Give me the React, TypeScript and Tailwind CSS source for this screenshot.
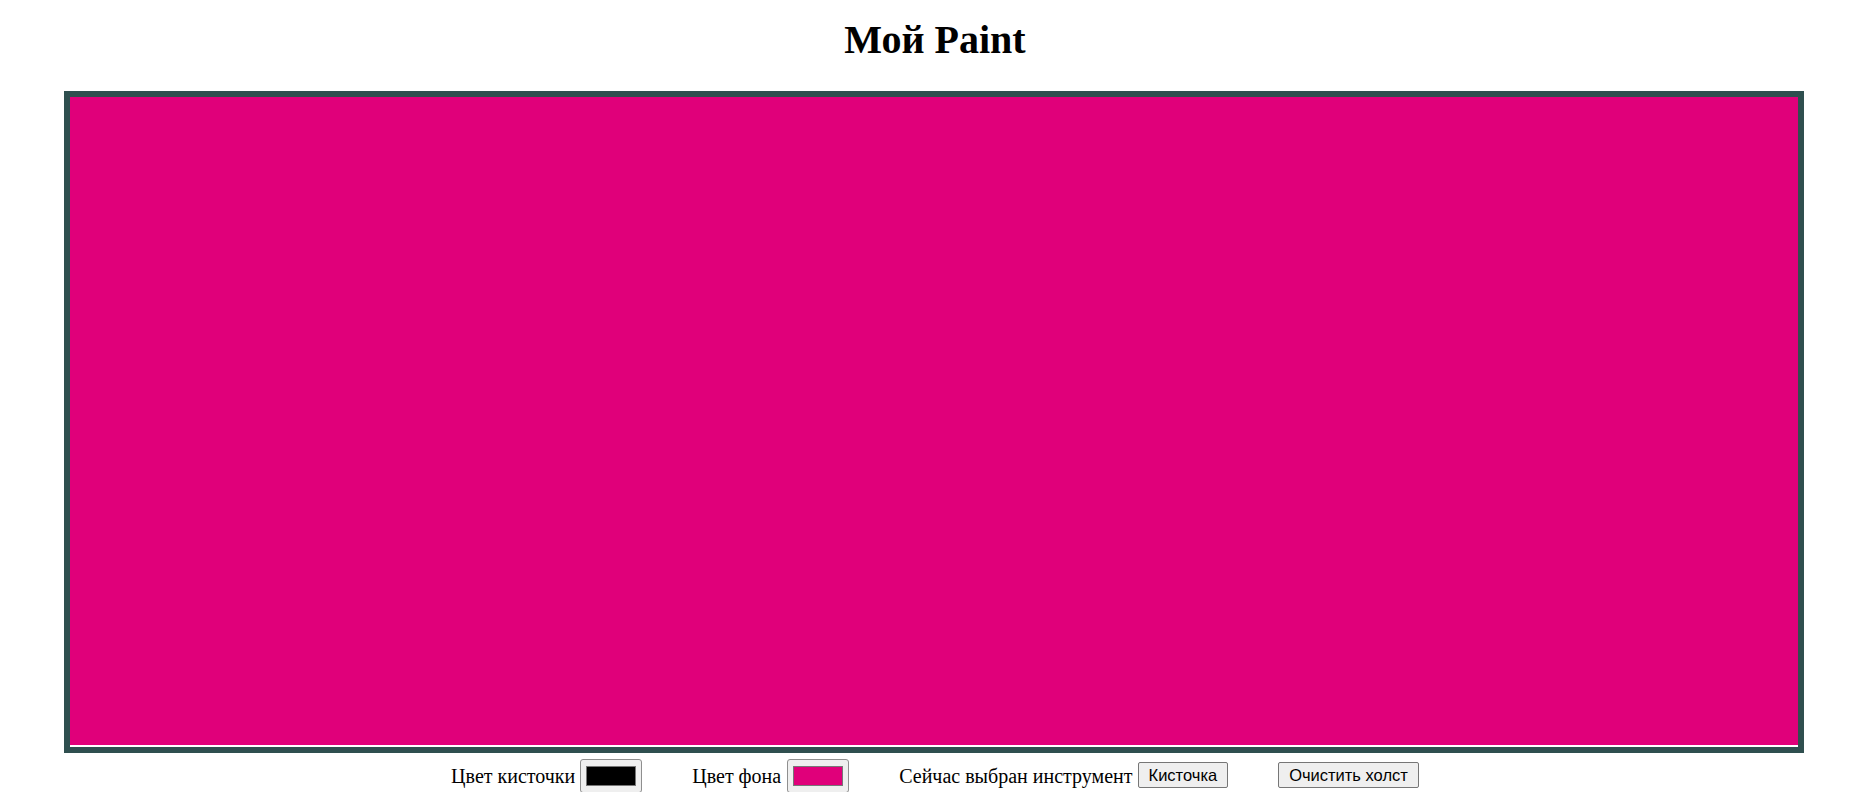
import React from "react";

const serif = { fontFamily: '"Liberation Serif", "Times New Roman", serif' };

function ColorBox({ color }: { color: string }) {
  return (
    <div className="mt-[6px] flex h-[34px] w-[62px] items-start justify-center rounded-[3px] border border-[#8f8f8f] bg-[#efefef] pt-[6px]">
      <div className="h-[20px] w-[50px] border border-[#777777]" style={{ backgroundColor: color }} />
    </div>
  );
}

function Btn({ label }: { label: string }) {
  return (
    <div
      className="mt-[9px] flex h-[26px] items-center rounded-[2px] border border-[#767676] bg-[#efefef] px-[10px] text-[16.5px] leading-none text-black"
      style={{ fontFamily: '"Liberation Sans", Arial, sans-serif' }}
    >
      {label}
    </div>
  );
}

export default function App() {
  return (
    <div className="h-[792px] w-full overflow-hidden bg-white text-black" style={serif}>
      <h1 className="pt-[19px] text-center text-[40px] font-bold leading-[42px]">Мой Paint</h1>
      <div className="ml-[64px] mt-[30px] w-[1740px] border-[6px] border-[#2f4f4f] bg-white">
        <div className="h-[648px] w-full bg-[#e0007a]" />
        <div className="h-[2px] w-full bg-white" />
      </div>
      <div className="flex justify-center gap-[50px] text-[20px] leading-[22px]">
        <div className="flex items-start gap-[5px]">
          <span className="mt-[12px]">Цвет кисточки</span>
          <ColorBox color="#000000" />
        </div>
        <div className="flex items-start gap-[6px]">
          <span className="mt-[12px]">Цвет фона</span>
          <ColorBox color="#e0007a" />
        </div>
        <div className="flex items-start gap-[5px]">
          <span className="mt-[12px]">Сейчас выбран инструмент</span>
          <Btn label="Кисточка" />
        </div>
        <div className="flex items-start">
          <Btn label="Очистить холст" />
        </div>
      </div>
    </div>
  );
}
